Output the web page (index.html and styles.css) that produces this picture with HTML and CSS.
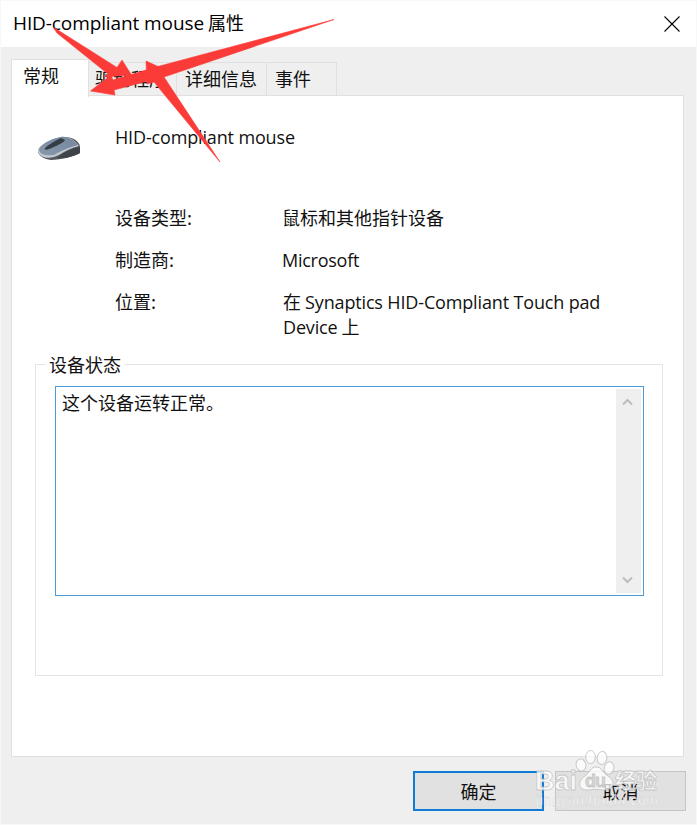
FILE: index.html
```html
<!DOCTYPE html>
<html lang="zh-CN">
<head>
    <meta charset="UTF-8">
    <meta name="viewport" content="width=device-width, initial-scale=1.0">
    <title>HID-compliant mouse 属性</title>
    <link rel="stylesheet" href="styles.css">
</head>
<body>
    <div class="dialog">
        <div class="titlebar">
            <span class="title"><span class="latin">HID-compliant mouse</span> 属性</span>
            <svg class="close" width="16" height="16" viewBox="0 0 16 16"><path d="M.5 .5l15 15M15.5 .5l-15 15" stroke="#000" stroke-width="1.1"/></svg>
        </div>

        <div class="tabs">
            <div class="tab active">常规</div>
            <div class="tab driver">驱动程序</div>
            <div class="tab details">详细信息</div>
            <div class="tab events">事件</div>
        </div>

        <div class="panel">
            <div class="device">
                <svg class="mouse" width="44" height="27" viewBox="0 0 44 27">
                    <defs>
                        <linearGradient id="top" x1="0" y1="1" x2="1" y2="0">
                            <stop offset="0" stop-color="#8797ab"/>
                            <stop offset="1" stop-color="#73879d"/>
                        </linearGradient>
                    </defs>
                    <path d="M1 16C1 11 14 4 26 2C36 1 43 7 43 12V18C38 21 24 25 14 25C6 24 1 20 1 16Z" fill="#53595f"/>
                    <path d="M1 16C2 22 9 24 17 22C24 20 27 15 42 11C37 4 30 1 24 2C12 4 1 11 1 16Z" fill="#c3cad0"/>
                    <path d="M2 15C3 20 10 21 17 20C23 17 29 13 41 10C36 4 29 1 24 2C12 4 2 11 2 15Z" fill="url(#top)"/>
                    <path d="M8 13C12 9 18 6 24 3L28 5C26 8 19 11 12 14C9 15 7 15 8 13Z" fill="#353c44"/>
                    <path d="M20 23C26 18 34 13 43 12V18C36 22 27 24 20 23Z" fill="#3e444a"/>
                </svg>
                <span class="latin">HID-compliant mouse</span>
            </div>

            <div class="info">
                <div class="label">设备类型:</div>
                <div class="value">鼠标和其他指针设备</div>
                <div class="label">制造商:</div>
                <div class="value latin maker">Microsoft</div>
                <div class="label">位置:</div>
                <div class="value location">在 <span class="latin">Synaptics HID-Compliant Touch pad</span><br><span class="latin">Device</span> 上</div>
            </div>

            <fieldset class="status">
                <legend>设备状态</legend>
                <div class="status-box">
                    <div class="status-text">这个设备运转正常。</div>
                    <div class="scrollbar">
                        <svg width="11" height="8" viewBox="0 0 11 8"><path d="M1 6.5l4.5-4.5L10 6.5" fill="none" stroke="#bcbcbc" stroke-width="2"/></svg>
                        <svg width="11" height="8" viewBox="0 0 11 8"><path d="M1 1.5L5.5 6L10 1.5" fill="none" stroke="#bcbcbc" stroke-width="2"/></svg>
                    </div>
                </div>
            </fieldset>
        </div>

        <div class="buttons">
            <button class="ok">确定</button>
            <button class="cancel">取消</button>
        </div>
    </div>

    <!-- Arrows over the tabs -->
    <svg class="arrows" width="697" height="180" viewBox="0 0 697 180">
        <g fill="#fb3b38" stroke="#fb3b38" stroke-width=".6" stroke-linejoin="round">
            <path d="M53 27L117 67.500L122 60L131.500 75L104 77L108 74L57 33Z"/>
            <path d="M334 19.500L167 76L114 90L115 95L90.500 91L111 75L113 80L156 67Z"/>
            <path d="M220 162L154 82L147 84L146 61L168 71L164 77Z"/>
        </g>
    </svg>

    <!-- Watermark -->
    <svg class="watermark" width="130" height="70" viewBox="0 0 130 70">
        <g fill="#fff" fill-opacity=".75" stroke="#bdbdbd" stroke-opacity=".8" stroke-width="1">
            <ellipse cx="51" cy="20" rx="4.8" ry="6.2" transform="rotate(-12 51 20)"/>
            <ellipse cx="60.500" cy="12" rx="4.8" ry="6.5"/>
            <ellipse cx="72" cy="13" rx="4.8" ry="6.5" transform="rotate(8 72 13)"/>
            <ellipse cx="79" cy="23" rx="4.8" ry="6.2" transform="rotate(15 79 23)"/>
            <path d="M66 22C61 22 60 27 55 31C46 37 49 46 59 45C64 44 68 44 73 45C83 46 87 37 78 31C72 27 72 22 66 22Z"/>
        </g>
        <g class="mark">
            <text x="5" y="45" font-size="28" textLength="42" lengthAdjust="spacingAndGlyphs">Bai</text>
            <text class="du" x="55" y="42" font-size="18" textLength="21">du</text>
            <text class="cn" x="85" y="43" font-size="21" textLength="42">经验</text>
            <text class="url" x="6" y="60" font-size="14" textLength="122">jingyan.baidu.com</text>
        </g>
    </svg>
</body>
</html>
```

FILE: styles.css
```css
* {
    box-sizing: border-box;
}
body {
    margin: 0;
    background: #f8f8f8;
    color: #111;
    font-family: "Noto Sans CJK SC", sans-serif;
    font-size: 18px;
    line-height: 24px;
}
.latin {
    font-family: "Open Sans", "Noto Sans CJK SC", sans-serif;
    letter-spacing: -0.15px;
}
.dialog {
    width: 695px;
    height: 823px;
    margin: 1px;
    background: #efefef;
    overflow: hidden;
}
.titlebar {
    display: flex;
    justify-content: space-between;
    height: 46px;
    padding: 9px 16px 0 12px;
    background: #fff;
    color: #000;
}
.title .latin {
    font-size: 19px;
    letter-spacing: -0.1px;
}
.close {
    margin-top: 6px;
}
.tabs {
    display: flex;
    align-items: flex-end;
    height: 48px;
    padding-left: 10px;
}
.tab {
    height: 33px;
    padding: 3px 0 0 8px;
    border-top: 1px solid #e0e0e0;
    border-right: 1px solid #e0e0e0;
}
.tab.active {
    position: relative;
    width: 78px;
    height: 38px;
    padding: 3px 0 0 11px;
    margin-bottom: -2px;
    background: #fff;
    border-left: 1px solid #e0e0e0;
}
.driver {
    width: 88px;
    padding-left: 6px;
    overflow: hidden;
}
.details {
    width: 90px;
}
.events {
    width: 70px;
}
.panel {
    width: 673px;
    height: 662px;
    margin-left: 10px;
    padding: 28px 21px 0 23px;
    background: #fff;
    border: 1px solid #e0e0e0;
}
.device {
    display: flex;
    height: 81px;
}
.mouse {
    margin: 11px 34px 0 2px;
}
.device .latin {
    padding-top: 1px;
}
.info {
    display: grid;
    grid-template-columns: 167px 1fr;
    grid-template-rows: 42px 42px 60px;
    padding-left: 80px;
}
.maker {
    padding-top: 1px;
    letter-spacing: -0.25px;
}
.location {
    padding-left: 1px;
}
.status {
    width: 627px;
    height: 323px;
    margin: 4px 0 0;
    padding: 11px 18px 0 19px;
    border: 1px solid #e5e5e5;
}
.status legend {
    height: 22px;
    margin-left: -9px;
    padding: 0 3px;
    line-height: 22px;
}
.status-box {
    display: flex;
    justify-content: space-between;
    width: 589px;
    height: 210px;
    padding: 2px;
    border: 1px solid #4c9bd8;
}
.status-text {
    padding: 1px 0 0 4px;
}
.scrollbar {
    display: flex;
    flex-direction: column;
    justify-content: space-between;
    align-items: center;
    width: 25px;
    padding: 9px 2px 9px 0;
    background: #efefef;
}
.buttons {
    display: flex;
    justify-content: flex-end;
    gap: 11px;
    padding: 14px 10px 0 0;
}
.buttons button {
    width: 131px;
    height: 40px;
    padding: 0;
    background: #e1e1e1;
    border: 1px solid #c5c5c5;
    color: #111;
    font: inherit;
}
.buttons .ok {
    border: 2px solid #0f7bd5;
}
.arrows {
    position: absolute;
    top: 0;
    left: 0;
}
.watermark {
    position: absolute;
    top: 745px;
    left: 530px;
}
.mark text {
    fill: #fff;
    fill-opacity: .8;
    stroke: #b5b5b5;
    stroke-opacity: .7;
    stroke-width: .8px;
    font-family: "Liberation Sans", sans-serif;
    font-weight: bold;
}
.mark .du {
    fill: #d0d0d0;
}
.mark .cn {
    font-family: "Noto Sans CJK SC", sans-serif;
}
.mark .url {
    font-weight: normal;
    stroke-width: .3px;
}
```
